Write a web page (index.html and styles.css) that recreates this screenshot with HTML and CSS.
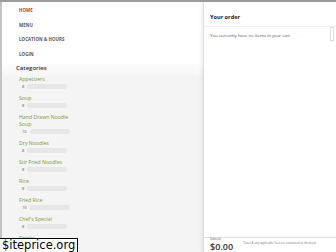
FILE: index.html
```html
<!DOCTYPE html>
<html lang="en">
<head>
  <meta charset="UTF-8">
  <meta name="viewport" content="width=device-width, initial-scale=1.0">
  <title>Menu</title>
  <link rel="stylesheet" href="styles.css">
</head>
<body>
  <div class="page">
    <div class="menu-col">
      <ul class="nav">
        <li class="active">HOME</li>
        <li>MENU</li>
        <li>LOCATION &amp; HOURS</li>
        <li>LOGIN</li>
      </ul>

      <div class="categories">
        <h2>Categories</h2>
        <div class="cat"><div class="name">Appetizers</div><div class="price"><span>8</span><i></i></div></div>
        <div class="cat"><div class="name">Soup</div><div class="price"><span>8</span><i></i></div></div>
        <div class="cat"><div class="name">Hand Drawn Noodle Soup</div><div class="price"><span>10</span><i></i></div></div>
        <div class="cat"><div class="name">Dry Noodles</div><div class="price"><span>8</span><i></i></div></div>
        <div class="cat"><div class="name">Stir Fried Noodles</div><div class="price"><span>8</span><i></i></div></div>
        <div class="cat"><div class="name">Rice</div><div class="price"><span>8</span><i></i></div></div>
        <div class="cat"><div class="name">Fried Rice</div><div class="price"><span>10</span><i></i></div></div>
        <div class="cat"><div class="name">Chef's Special</div><div class="price"><span>8</span><i></i></div></div>
        <div class="cat"><div class="name">Drinks</div><div class="price"><span>8</span><i></i></div></div>
      </div>
    </div>

    <div class="order">
      <div class="order-head">Your order</div>
      <div class="order-body">
        <p>You currently have no items in your cart.</p>
        <span class="scroll"></span>
      </div>
      <div class="order-foot">
        <div class="subtotal">
          <small>Subtotal</small>
          <strong>$0.00</strong>
        </div>
        <p class="taxes">Taxes &amp; any applicable fees are calculated at checkout</p>
      </div>
    </div>
  </div>

  <div class="watermark">$iteprice.org</div>
</body>
</html>
```

FILE: styles.css
```css
body {
  margin: 0;
  font-family: "Open Sans", "Liberation Sans", sans-serif;
  color: #333;
  background: #fff;
  overflow: hidden;
}
.page {
  display: flex;
  height: 250px;
  border-top: 2px solid #9c9c9c;
}
.menu-col {
  width: 201px;
  border-left: 2px solid #c4c4c4;
  background: linear-gradient(#fff 0, #fff 60px, #f4f4f4 75px, #f4f4f4 100%);
  overflow: hidden;
}
.nav {
  list-style: none;
  margin: 0;
  padding: 1px 0 0 17px;
}
.nav li {
  font-size: 4.4px;
  font-weight: bold;
  line-height: 14.5px;
  color: #555;
  letter-spacing: 0.1px;
}
.nav .active {
  color: #c0392b;
}
.categories {
  padding: 3px 0 0 14px;
}
.categories h2 {
  margin: 0 0 4px;
  font-size: 6px;
  font-weight: 600;
  line-height: 8px;
  color: #333;
}
.cat {
  padding-left: 3px;
  margin-bottom: 5px;
  width: 68px;
}
.cat .name {
  max-width: 56px;
  font-size: 5.2px;
  line-height: 7px;
  color: #7a9a35;
}
.cat .price {
  display: flex;
  align-items: center;
  gap: 3px;
  height: 7px;
  padding-left: 3px;
}
.cat .price span {
  font-size: 4px;
  color: #555;
}
.cat .price i {
  display: block;
  width: 40px;
  height: 5px;
  border-radius: 2px;
  background: #e6e6e6;
}
.order {
  flex: 1;
  display: flex;
  flex-direction: column;
  border-left: 1px solid #dcdcdc;
  box-shadow: -2px 0 3px rgba(0, 0, 0, 0.06);
  background: #fff;
}
.order-head {
  padding: 11px 0 0 6px;
  height: 13px;
  font-size: 5.6px;
  font-weight: bold;
  color: #222;
  border-bottom: 1px solid #f0f0f0;
}
.order-body {
  flex: 1;
  position: relative;
  padding: 4px 6px;
}
.order-body p {
  margin: 0;
  font-size: 4.3px;
  line-height: 8px;
  color: #555;
}
.scroll {
  position: absolute;
  right: 2px;
  top: 0;
  width: 2px;
  height: 12px;
  border: 1px solid #ddd;
}
.order-foot {
  display: flex;
  align-items: flex-start;
  gap: 10px;
  padding: 0 6px 1px;
  border-top: 1px solid #ddd;
  height: 13px;
}
.subtotal small {
  display: block;
  font-size: 2.8px;
  line-height: 3.5px;
  color: #666;
}
.subtotal strong {
  display: block;
  margin-top: 0.5px;
  font-size: 9px;
  line-height: 9px;
  font-weight: 600;
  color: #333;
}
.taxes {
  margin: 3px 0 0;
  font-size: 2.9px;
  color: #777;
}
.watermark {
  position: absolute;
  left: 0;
  bottom: 0;
  padding: 0 2px;
  font-family: "DejaVu Sans", sans-serif;
  font-size: 11.5px;
  line-height: 13px;
  color: #000;
  background: #fff;
  border: 1px solid #000;
  border-bottom: none;
  border-left: none;
}
```
